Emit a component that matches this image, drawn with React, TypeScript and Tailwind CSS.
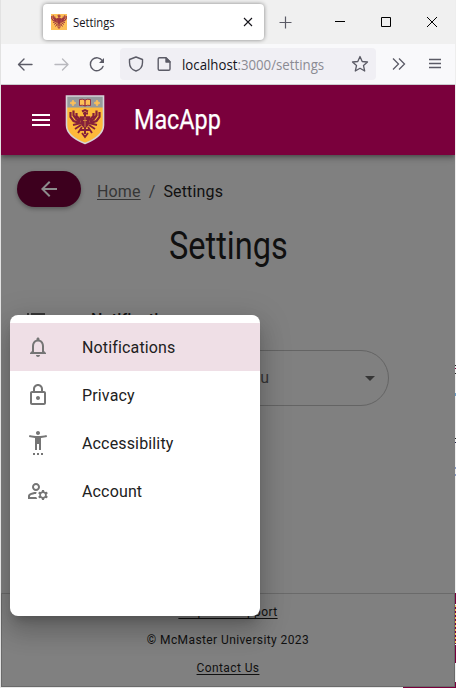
import type { ReactNode } from "react";
import {
  MdArrowBack,
  MdArrowDropDown,
  MdMenu,
  MdNotificationsNone,
  MdOutlineLock,
  MdOutlineManageAccounts,
  MdSettingsAccessibility,
} from "react-icons/md";

function Eagle({ color }: { color: string }) {
  return (
    <g fill="none" stroke={color}>
      <path d="M17 16.500l3-1.500 3 1.500M18 18.500h5M20 17v22" strokeWidth="2" />
      <path d="M5.500 17v5l3 4 6 2M8.500 15.500v5l3 4 4 2M11.500 18v3l4 4M34.500 17v5l-3 4-6 2M31.500 15.500v5l-3 4-4 2M28.500 18v3l-4 4" strokeWidth="2.200" />
      <path d="M16 28l-8 2M16 30l-6 4M17 32l-4 6M24 28l8 2M24 30l6 4M23 32l4 6M17 38l3 4 3-4M15 35h10" strokeWidth="1.900" />
      <path d="M15.500 22l1.500 8 3 3 3-3 1.500-8z" fill={color} strokeWidth="1.500" />
    </g>
  );
}

function Crest() {
  return (
    <svg className="ml-3 h-[50px] w-10 shrink-0" viewBox="0 0 40 50">
      <path d="M1.500 1h37v29c0 8-7 14-18.500 18.500C8.500 44 1.500 38 1.500 30z" fill="#fdb93a" />
      <path d="M1.500 1h37v11.500h-37z" fill="#969a9c" />
      <path d="M14.500 4.500q3-.8 5.500.5 2.500-1.300 5.500-.5v6q-3-.8-5.500.5-2.500-1.300-5.500-.5z" fill="#fdbf57" stroke="#8c2440" strokeWidth=".9" />
      <path d="M20 5v6" stroke="#7a003c" />
      <path d="M8 5l1 2 2 1-2 1-1 2-1-2-2-1 2-1zM32 5l1 2 2 1-2 1-1 2-1-2-2-1 2-1z" fill="#fdbf57" stroke="#fdbf57" strokeWidth=".8" />
      <Eagle color="#85203a" />
      <path d="M20 22v10M18 25.500h4" stroke="#e8a33f" strokeWidth=".7" />
      <path d="M1.500 1h37v29c0 8-7 14-18.500 18.500C8.500 44 1.500 38 1.500 30z" fill="none" stroke="#d5d2d8" strokeWidth="1.600" />
    </svg>
  );
}

function TabStrip() {
  return (
    <div className="flex h-11 items-start bg-[#f0f0f0] text-[#15141a]">
      <div className="ml-[42px] mt-1 flex h-9 w-[221px] items-center rounded bg-white pl-2 shadow-[0_0_4px_rgba(0,0,0,0.45)]">
        <svg className="size-4" viewBox="0 0 16 16">
          <path d="M0 0h16v16H0z" fill="#fdbf57" />
          <svg x="0" y="-1" width="16" height="18" viewBox="4 14 32 30">
            <Eagle color="#9c3440" />
          </svg>
        </svg>
        <span className="ml-[6px] mt-px w-[42px] origin-left scale-x-[0.935] whitespace-nowrap font-['Open_Sans',sans-serif] text-[12px] leading-4">Settings</span>
        <svg className="ml-[127px] size-3 shrink-0" viewBox="0 0 12 12" fill="none" stroke="currentColor" strokeWidth="1.100">
          <path d="M2 2l8 8M10 2l-8 8" />
        </svg>
      </div>
      <svg className="ml-[15px] mt-[15px] size-[14px] shrink-0" viewBox="0 0 14 14" fill="none" stroke="#5b5b66" strokeWidth="1.200">
        <path d="M6.500 1.500v12M.5 7.500h12" />
      </svg>
      <svg className="ml-[41px] mt-4 h-[12px] w-[105px] shrink-0" viewBox="0 0 105 12" fill="none" stroke="#000">
        <path d="M1 5.500h10M47.500 1.500h9v9h-9zM93 1l10 10M103 1L93 11" />
      </svg>
    </div>
  );
}

function AddressBar() {
  return (
    <div className="flex h-[41px] items-center border-b border-[#cccccf] bg-[#f9f9fb]">
      <svg className="ml-4 h-5 w-[90px] shrink-0" viewBox="0 0 90 20" fill="none" strokeWidth="1.400" strokeLinecap="round" strokeLinejoin="round">
        <path d="M15 10.500H2M7 5L1.500 10.500 7 16" stroke="#5b5b66" />
        <path d="M38 10.500h12M45.500 5L51 10.500l-5.500 5.500" stroke="#b9b9be" />
        <path d="M85.500 7A6.500 6.500 0 1 0 86 12.500" stroke="#5b5b66" />
        <path d="M87 4v5h-5z" fill="#5b5b66" stroke="none" />
      </svg>
      <div className="ml-[13px] flex h-8 w-[256px] shrink-0 items-center rounded bg-[#f0eff4]">
        <svg className="ml-2 h-4 w-[44px] shrink-0" viewBox="0 0 44 16" fill="none" stroke="#5b5b66" strokeWidth="1.400" strokeLinejoin="round">
          <path d="M8 1l6.500 2.500v3C14.500 11 11.500 14 8 15 4.500 14 1.500 11 1.500 6.500v-3z" />
          <path d="M31.500 1.700H38l4 4V13q0 1.300-1.300 1.300h-9.200q-1.300 0-1.300-1.300V3q0-1.300 1.300-1.300z" />
          <path d="M38 2v4h4z" fill="#5b5b66" />
        </svg>
        <span className="ml-[10px] mt-px w-[144px] origin-left scale-x-[0.945] whitespace-nowrap font-['Open_Sans',sans-serif] text-[14px] text-[#15141a]">
          localhost<span className="text-[#8b8b93]">:3000/settings</span>
        </span>
        <svg className="ml-[25px] size-[18px] shrink-0" viewBox="0 0 18 18" fill="none" stroke="#5b5b66" strokeWidth="1.300" strokeLinejoin="round">
          <path d="M9 1.500l2.200 5 5.300.5-4 3.600 1.200 5.400L9 13.300 4.300 16l1.200-5.400-4-3.600 5.300-.5z" />
        </svg>
      </div>
      <svg className="ml-4 h-4 w-[50px] shrink-0" viewBox="0 0 50 16" fill="none" stroke="#5b5b66" strokeWidth="1.300">
        <path d="M1 2.500L6.500 8 1 13.500M7 2.500L12.500 8 7 13.500M37 3.500h12M37 7.500h12M37 11.500h12" />
      </svg>
    </div>
  );
}

function AppHeader() {
  return (
    <header className="relative flex h-[70px] items-center bg-[#7a003c] text-white shadow-[0_2px_4px_-1px_rgba(0,0,0,0.3),0_4px_5px_rgba(0,0,0,0.14),0_1px_10px_rgba(0,0,0,0.12)]">
      <MdMenu className="ml-7 size-6 shrink-0" />
      <Crest />
      <span className="ml-[29px] origin-left scale-x-[0.865] text-[27px] leading-8 [-webkit-text-stroke:0.25px_white]">MacApp</span>
    </header>
  );
}

function MenuItem({ icon, label, selected }: { icon: ReactNode; label: string; selected?: boolean }) {
  return (
    <li className={`flex h-12 items-center pl-4 text-[16px] tracking-[0.15px] text-[#212121] ${selected ? "bg-[#efdfe6]" : ""}`}>
      <span className="w-14 text-[24px] text-[#757575]">{icon}</span>
      <span className="mt-0.5">{label}</span>
    </li>
  );
}

function PageBody() {
  return (
    <main className="flex h-[438px] flex-col px-4 pt-4 text-[#101010]">
      <div className="flex h-9 items-center">
        <div className="flex h-9 w-16 items-center justify-center rounded-full bg-[#3d001e] text-[#8c8c8c] shadow-[0_2px_4px_rgba(0,0,0,0.3)]">
          <MdArrowBack className="size-6" />
        </div>
        <nav className="ml-4 mt-[5px] flex text-[16px] leading-6 tracking-[0.15px]">
          <span className="text-[#363636] underline decoration-1 underline-offset-2">Home</span>
          <span className="mx-2 text-[#363636]">/</span>
          <span>Settings</span>
        </nav>
      </div>
      <h1 className="mt-3 flex h-[54px] items-center justify-center text-[38px]">
        <span className="scale-x-[0.855]">Settings</span>
      </h1>
      <div className="mt-[31px] flex h-8 items-center pl-[9px] text-[16px] font-medium tracking-[0.15px]">
        <svg className="h-5 w-5 text-[#363636]" viewBox="0 0 20 20" fill="currentColor">
          <path d="M1 3h2v2H1zM5 3h14v2H5zM1 9h2v2H1zM5 9h14v2H5zM1 14h2v2H1zM5 14h14v2H5z" />
        </svg>
        <span className="ml-[45px]">Notifications</span>
      </div>
      <div className="ml-2 mt-[14px] flex h-14 w-[364px] items-center justify-between rounded-full border border-[#646464] pl-[136px] pr-[6px] text-[16px] text-[#363636]">
        <span className="w-[107px] text-right">Choose Menu</span>
        <MdArrowDropDown className="size-6" />
      </div>
    </main>
  );
}

function SettingsMenu() {
  return (
    <ul className="absolute left-[9px] top-[230px] h-[301px] w-[250px] rounded-lg bg-white py-2 shadow-[0_8px_10px_-5px_rgba(0,0,0,0.2),0_16px_24px_2px_rgba(0,0,0,0.14),0_6px_30px_5px_rgba(0,0,0,0.12)]">
      <MenuItem icon={<MdNotificationsNone />} label="Notifications" selected />
      <MenuItem icon={<MdOutlineLock />} label="Privacy" />
      <MenuItem icon={<MdSettingsAccessibility />} label="Accessibility" />
      <MenuItem icon={<MdOutlineManageAccounts />} label="Account" />
    </ul>
  );
}

function Footer() {
  return (
    <footer className="flex h-[94px] flex-col items-center gap-2 border border-[#6a6a6a] pt-2 text-[12px] leading-5 tracking-[0.4px] text-[#101010]">
      <span className="underline underline-offset-2">Help and Support</span>
      <span>© McMaster University 2023</span>
      <span className="underline underline-offset-2">Contact Us</span>
    </footer>
  );
}

export default function App() {
  return (
    <div className="h-[688px] w-[456px] overflow-hidden bg-[#e8e8e8] font-['Roboto',sans-serif]">
      <div className="flex">
        <div className="w-px shrink-0 bg-[#e2e2e2]" />
        <div className="w-[454px] shrink-0">
          <TabStrip />
          <AddressBar />
          <div className="relative h-[602px] overflow-hidden bg-[#808080]">
            <AppHeader />
            <PageBody />
            <Footer />
            <SettingsMenu />
          </div>
        </div>
        <div className="flex w-px shrink-0 flex-col bg-[#eeeeee]">
          <span className="mt-[365px] h-px bg-[#222]" />
          <span className="mt-[2px] h-px bg-[#7a003c]" />
          <span className="mt-[4px] h-px bg-[#222]" />
          <span className="mt-[19px] h-[3px] bg-[#6b9fca]" />
          <span className="mt-[42px] h-px bg-[#222]" />
          <span className="mt-[3px] h-px bg-[#222249]" />
          <span className="mt-[24px] h-[2px] bg-[#899ac5]" />
          <span className="mt-[5px] h-[2px] bg-[#899ac5]" />
          <span className="mt-[117px] h-[11px] bg-[#7a003c]" />
          <span className="mt-px h-[39px] bg-[repeating-linear-gradient(#fdbf57_0_2px,#7a003c_2px_4px)]" />
          <span className="mt-px h-[18px] bg-[#7a003c]" />
          <span className="mt-[19px] h-[5px] bg-[#7a003c]" />
        </div>
      </div>
      <div className="ml-[403px] h-px bg-[#7a003c]" />
    </div>
  );
}
